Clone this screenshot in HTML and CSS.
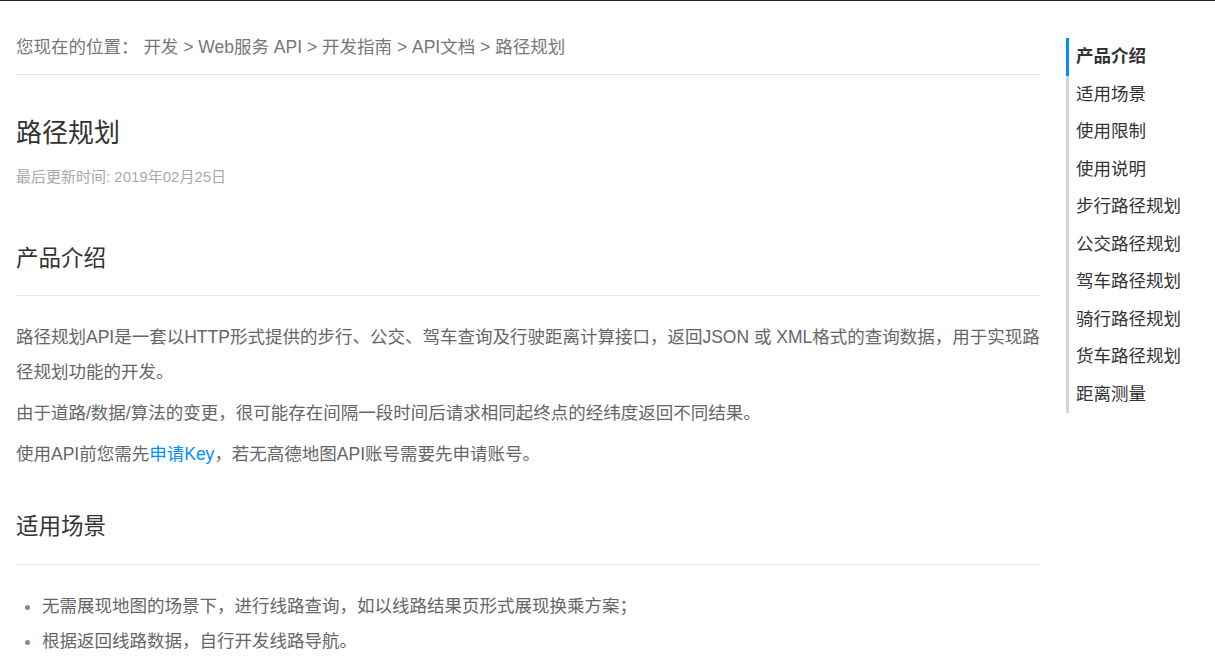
FILE: index.html
```html
<!DOCTYPE html>
<html lang="zh-CN">
<head>
    <meta charset="UTF-8">
    <meta name="viewport" content="width=device-width, initial-scale=1.0">
    <title>路径规划 - Web服务 API</title>
    <link rel="stylesheet" href="styles.css">
</head>
<body>

<div class="topbar"></div>

<div class="page">
    <div class="main">
        <div class="breadcrumb">
            您现在的位置： <a href="#">开发</a> &gt; <a href="#">Web服务 API</a> &gt; <a href="#">开发指南</a> &gt; <a href="#">API文档</a> &gt; <span>路径规划</span>
        </div>

        <h1 class="title">路径规划</h1>
        <div class="update-time">最后更新时间: 2019年02月25日</div>

        <h2 class="section-title" id="intro">产品介绍</h2>
        <p>路径规划API是一套以HTTP形式提供的步行、公交、驾车查询及行驶距离计算接口，返回JSON 或 XML格式的查询数据，用于实现路径规划功能的开发。</p>
        <p>由于道路/数据/算法的变更，很可能存在间隔一段时间后请求相同起终点的经纬度返回不同结果。</p>
        <p>使用API前您需先<a class="link" href="#">申请Key</a>，若无高德地图API账号需要先申请账号。</p>

        <h2 class="section-title" id="scene">适用场景</h2>
        <ul class="list">
            <li>无需展现地图的场景下，进行线路查询，如以线路结果页形式展现换乘方案；</li>
            <li>根据返回线路数据，自行开发线路导航。</li>
        </ul>
    </div>

    <ul class="toc">
        <li class="active"><a href="#intro">产品介绍</a></li>
        <li><a href="#scene">适用场景</a></li>
        <li><a href="#">使用限制</a></li>
        <li><a href="#">使用说明</a></li>
        <li><a href="#">步行路径规划</a></li>
        <li><a href="#">公交路径规划</a></li>
        <li><a href="#">驾车路径规划</a></li>
        <li><a href="#">骑行路径规划</a></li>
        <li><a href="#">货车路径规划</a></li>
        <li><a href="#">距离测量</a></li>
    </ul>
</div>

</body>
</html>
```

FILE: styles.css
```css
body {
    margin: 0;
    font-family: "Liberation Sans", Arial, "Noto Sans CJK SC", sans-serif;
    font-size: 17.5px;
    color: #666;
    background: #fff;
}
a {
    color: inherit;
    text-decoration: none;
}
.topbar {
    height: 1px;
    background: #222;
}
.page {
    display: flex;
    align-items: flex-start;
    padding-left: 16px;
}
.main {
    width: 1025px;
    flex-shrink: 0;
}
.breadcrumb {
    padding: 31px 0 12px;
    line-height: 30px;
    color: #777;
    border-bottom: 1px solid #e8e8e8;
}
.title {
    margin: 40px 0 0;
    font-size: 26px;
    font-weight: normal;
    line-height: 36px;
    color: #333;
}
.update-time {
    margin-top: 16px;
    font-size: 15px;
    line-height: 20px;
    color: #aaa;
}
.section-title {
    margin: 56px 0 0;
    padding-bottom: 20px;
    font-size: 22.5px;
    font-weight: normal;
    line-height: 32px;
    color: #333;
    border-bottom: 1px solid #e8e8e8;
}
.section-title + p,
.section-title + .list {
    margin-top: 24px;
}
p {
    margin: 6px 0 0;
    line-height: 35px;
}
.link {
    color: #0091ff;
}
#scene {
    margin-top: 39px;
    padding-bottom: 21px;
}
.list {
    margin: 0;
    padding-left: 26px;
    line-height: 35px;
}
.list li::marker {
    color: #888;
}
.toc {
    list-style: none;
    margin: 37px 0 0 25px;
    padding: 0;
}
.toc li {
    border-left: 3px solid #d4d4d4;
    padding-left: 7px;
    line-height: 37.5px;
    white-space: nowrap;
}
.toc li a {
    color: #333;
}
.toc li.active {
    border-left-color: #0091ff;
}
.toc li.active a {
    font-weight: bold;
}
```
